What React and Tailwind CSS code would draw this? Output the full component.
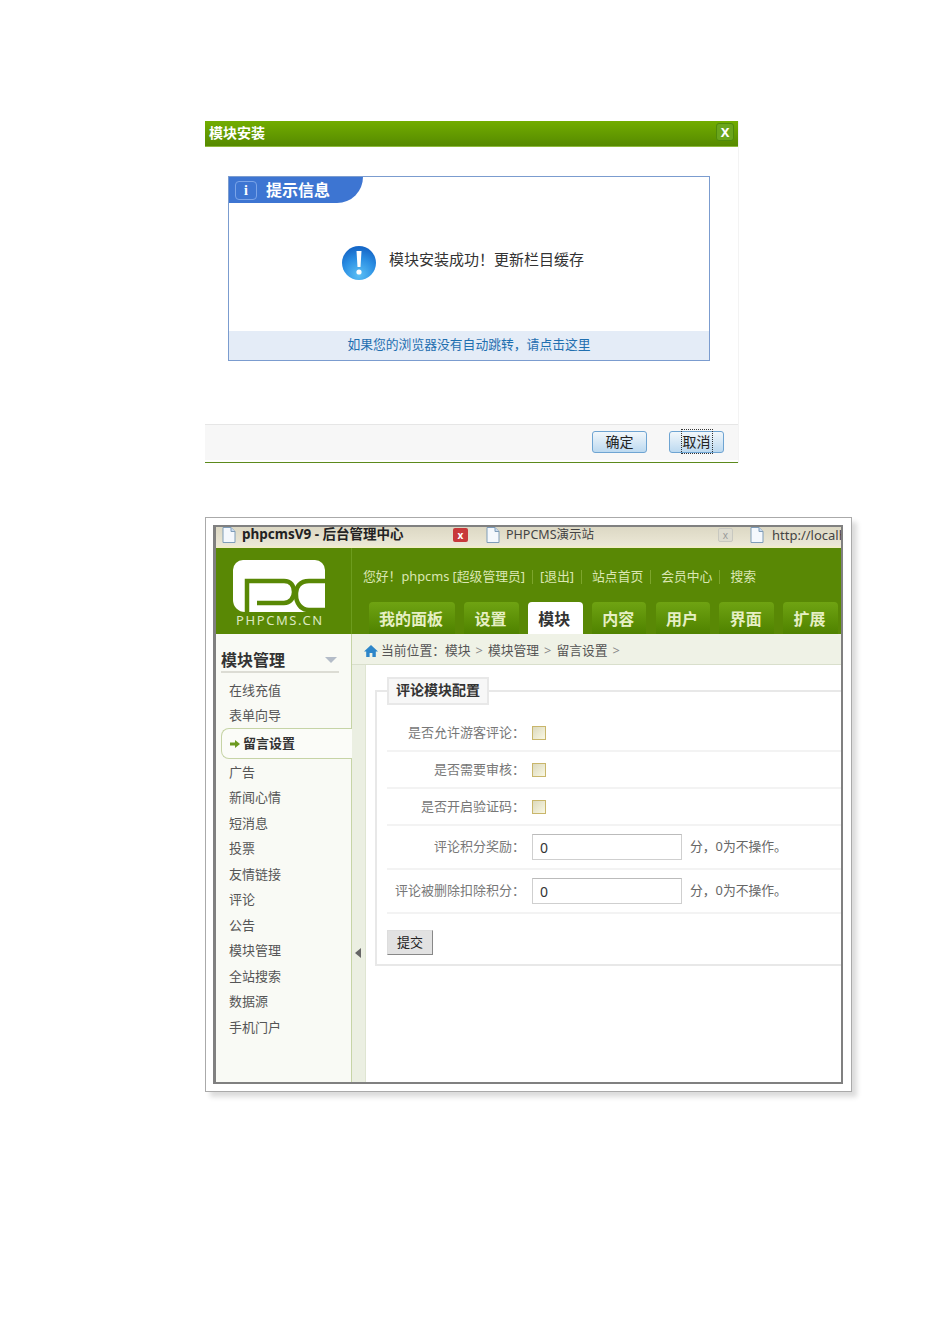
import React from 'react';

const cjk = { fontFamily: '"Noto Sans", "Noto Sans CJK SC", sans-serif' };

const DocIcon = ({ className }) => (
  <svg className={className} width="14" height="16" viewBox="0 0 14 16">
    <path d="M1 .5h8l4 4v11H1z" fill="#f4f8fd" stroke="#7f9db9" />
    <path d="M9 .5v4h4" fill="#c9daf0" stroke="#7f9db9" />
  </svg>
);

const AlertIcon = () => (
  <svg width="36" height="36" viewBox="0 0 36 36">
    <defs>
      <radialGradient id="alertBlue" cx="50%" cy="85%" r="80%">
        <stop offset="0" stopColor="#5cc0f5" />
        <stop offset="0.6" stopColor="#2b8fe3" />
        <stop offset="1" stopColor="#1668c8" />
      </radialGradient>
    </defs>
    <circle cx="18" cy="18" r="17" fill="url(#alertBlue)" />
    <path d="M15.5 6h5l-1 16h-3z" fill="#fff" />
    <circle cx="18" cy="27" r="2.6" fill="#fff" />
  </svg>
);

const Logo = () => (
  <svg width="92" height="52" viewBox="0 0 92 52" className="block">
    <path d="M10 0h72a10 10 0 0 1 10 10v42H12a12 12 0 0 1-12-12V10A10 10 0 0 1 10 0z" fill="#fff" />
    <path d="M14 52V21h37c7 0 10 5 10 11s-4 11-10 11H24" fill="none" stroke="#598805" strokeWidth="4.5" />
    <path d="M92 21H76c-9 0-13 6-13 12v2c0 8 5 15 13 15h16" fill="none" stroke="#598805" strokeWidth="4.5" />
  </svg>
);

const navTabs = [
  { label: '我的面板', w: 'w-[86px]' },
  { label: '设置', w: 'w-[54.5px]' },
  { label: '模块', w: 'w-[54.5px]', active: true },
  { label: '内容', w: 'w-[54.5px]' },
  { label: '用户', w: 'w-[54.5px]' },
  { label: '界面', w: 'w-[54.5px]' },
  { label: '扩展', w: 'w-[54.5px]' },
];

const sideTop = ['在线充值', '表单向导'];
const sideBottom = ['广告', '新闻心情', '短消息', '投票', '友情链接', '评论', '公告', '模块管理', '全站搜索', '数据源', '手机门户'];

const Sep = () => <span className="mx-[7px] h-[14px] w-px bg-[#7da52c]" />;

const FormRow = ({ label, h, children }) => (
  <div className={`flex items-center border-b-2 border-[#f3f3f3] ${h}`}>
    <div className="w-[138px] shrink-0 whitespace-nowrap text-right text-[13px] text-[#777]">{label}：</div>
    <div className="ml-[7px] flex items-center">{children}</div>
  </div>
);

const Check = () => (
  <span className="block h-[14px] w-[14px] border border-[#c9b66b] bg-gradient-to-br from-[#dcd9bd] to-[#f9f8e4]" />
);

const PointsInput = () => (
  <>
    <input
      readOnly
      value="0"
      className="h-[26px] w-[150px] border border-[#cfcfcf] border-t-[#bbb] bg-white pl-[7px] text-[14px] text-[#333] outline-none"
    />
    <span className="ml-[8px] whitespace-nowrap text-[12.8px] text-[#666]">分，0为不操作。</span>
  </>
);

export default function App() {
  return (
    <div className="h-[1344px] w-[950px] overflow-hidden bg-white pl-[205px] pt-[121px]" style={cjk}>
      {/* install dialog */}
      <div className="h-[342px] w-[534px] border-r border-[#f3f3f3]">
        <div className="flex h-[26px] items-center justify-between border-b border-[#8fba3c] bg-gradient-to-b from-[#72ad00] to-[#568a00] pb-[3px] pl-[4px] pr-[4px]">
          <span className="text-[14px] font-bold text-white">模块安装</span>
          <span className="flex h-[18px] w-[18px] items-center justify-center rounded-[3px] border border-[#4f8a0a] bg-[#6aa51c] text-[13px] font-bold leading-none text-white">X</span>
        </div>
        <div className="ml-[23px] mt-[29px] flex h-[185px] w-[482px] flex-col border border-[#7b9ccf]">
          <div className="flex h-[26px] w-[134px] items-center gap-[9px] rounded-br-[26px] bg-[#3d75d2] pl-[6px]">
            <span className="flex h-[19px] w-[22px] items-center justify-center rounded-[4px] border border-[#7ba4e8] font-['Liberation_Serif',serif] text-[14px] font-bold text-white">i</span>
            <span className="text-[16px] font-bold text-white">提示信息</span>
          </div>
          <div className="flex flex-1 items-center pb-[8px] pl-[112px]">
            <AlertIcon />
            <span className="mb-[7px] ml-[12px] text-[15px] text-[#333]">模块安装成功！更新栏目缓存</span>
          </div>
          <div className="flex h-[29px] items-center justify-center bg-[#e4ecf7] pb-[2px] text-[12.8px] text-[#1f6fb0]">
            如果您的浏览器没有自动跳转，请点击这里
          </div>
        </div>
        <div className="mt-[63px] flex h-[36px] items-start justify-end gap-[22px] border-t border-[#e6e6e6] bg-[#f7f7f7] pr-[14px] pt-[6px]">
          <button className="h-[22px] w-[55px] rounded-[3px] border border-[#6ea4d2] bg-gradient-to-b from-[#f2f7fb] to-[#bcd9f0] text-[14px] leading-none text-[#222]">确定</button>
          <button className="h-[22px] w-[55px] rounded-[3px] border border-[#6ea4d2] bg-gradient-to-b from-[#f2f7fb] to-[#bcd9f0] text-[14px] leading-none text-[#222]">
            <span className="border border-dotted border-[#333] px-px py-[2px]">取消</span>
          </button>
        </div>
        <div className="mt-[2px] h-px bg-[#5c8a1c]" />
      </div>

      {/* admin screenshot */}
      <div className="mt-[54px] h-[575px] w-[647px] border border-[#aaa] bg-white pl-[7px] pt-[7px] shadow-[5px_5px_5px_#dcdcdc]">
        <div className="flex h-[559px] w-[630px] flex-col overflow-hidden border-2 border-l-[3px] border-[#808080]">
          {/* browser tabs */}
          <div className="flex h-[21px] shrink-0 items-center border-b-2 border-[#f0ecc8] bg-gradient-to-b from-[#dcd8c4] to-[#ece8d6] pb-[3px] text-[13px] leading-none">
            <div className="flex w-[257px] shrink-0 items-center pl-[6px]">
              <DocIcon />
              <span className="ml-[6px] w-[211px] whitespace-nowrap text-[13.5px] font-bold text-[#222]">phpcmsV9 - 后台管理中心</span>
              <span className="flex h-[14px] w-[15px] items-center justify-center rounded-[2px] bg-[#c8393a] text-[10px] font-bold text-white">x</span>
            </div>
            <span className="ml-[4px] h-full w-px bg-[#d2ceb6]" />
            <div className="flex w-[256px] shrink-0 items-center pl-[9px]">
              <DocIcon />
              <span className="ml-[6px] w-[212px] whitespace-nowrap text-[12.5px] text-[#444]">PHPCMS演示站</span>
              <span className="flex h-[14px] w-[15px] items-center justify-center rounded-[2px] border border-[#c8c8c0] bg-[#dedcd0] text-[10px] text-[#999]">x</span>
            </div>
            <span className="ml-[9px] h-full w-px bg-[#d2ceb6]" />
            <div className="flex items-center pl-[8px]">
              <DocIcon />
              <span className="ml-[8px] whitespace-nowrap text-[#444]">http://localh</span>
            </div>
          </div>

          {/* green header */}
          <div className="flex h-[86px] shrink-0 bg-[#598805]">
            <div className="flex w-[136px] shrink-0 flex-col items-start border-r border-[#6d9c1d] pl-[17px] pt-[12px]">
              <Logo />
              <span className="ml-[3px] mt-[2px] text-[13px] leading-none tracking-[1.6px] text-[#dce8c0]">PHPCMS.CN</span>
            </div>
            <div className="flex min-w-0 flex-1 flex-col pl-[11px]">
              <div className="flex h-[54px] items-center whitespace-nowrap pt-[3px] text-[12.8px] text-[#dbe7b4]">
                <span>您好！phpcms [超级管理员]</span>
                <Sep />
                <span>[退出]</span>
                <Sep />
                <span className="ml-[3px]">站点首页</span>
                <Sep />
                <span className="ml-[3px]">会员中心</span>
                <Sep />
                <span className="ml-[3px]">搜索</span>
              </div>
              <div className="ml-[6px] flex gap-[9.3px]">
                {navTabs.map((tab) => (
                  <div
                    key={tab.label}
                    className={`flex h-[32px] items-center justify-center rounded-t-[4px] pr-[2px] pt-[1px] text-[16px] font-bold ${tab.w} ${
                      tab.active ? 'bg-white text-[#333]' : 'bg-gradient-to-b from-[#6fa312] to-[#4f8200] text-[#e6efc4]'
                    }`}
                  >
                    {tab.label}
                  </div>
                ))}
              </div>
            </div>
          </div>

          <div className="flex min-h-0 flex-1">
            {/* sidebar */}
            <div className="w-[136px] shrink-0 border-r border-[#c6d4a6] bg-[#f9faf5] pt-[15px]">
              <div className="ml-[5px] flex h-[24px] w-[118px] items-center justify-between border-b-2 border-[#dcdcd4] pr-[2px]">
                <span className="text-[16px] font-bold text-[#333]">模块管理</span>
                <span className="h-0 w-0 border-x-[6px] border-t-[6px] border-x-transparent border-t-[#b4bcc8]" />
              </div>
              <div className="mt-[4px]">
                {sideTop.map((item) => (
                  <div key={item} className="flex h-[25.6px] items-center pl-[13px] pt-[1px] text-[13px] text-[#555]">{item}</div>
                ))}
                <div className="-mr-px ml-[5px] flex h-[31px] items-center rounded-l-[8px] border border-r-0 border-[#c6d4a6] bg-[#fbfcf8] pl-[8px] text-[13px] font-bold text-[#333]">
                  <svg width="10" height="8" viewBox="0 0 10 8" className="mr-[3px]">
                    <path d="M0 2.5h5V0l5 4-5 4V5.5H0z" fill="#6c9a1f" />
                  </svg>
                  留言设置
                </div>
                {sideBottom.map((item) => (
                  <div key={item} className="flex h-[25.5px] items-center pl-[13px] pt-[1px] text-[13px] text-[#555]">{item}</div>
                ))}
              </div>
            </div>

            <div className="flex min-w-0 flex-1 flex-col">
              {/* breadcrumb */}
              <div className="flex h-[31px] shrink-0 items-center border-b border-[#d9dfcc] bg-[#eff2e6] pl-[12px] pt-[4px] text-[12.8px] text-[#555]">
                <svg width="14" height="14" viewBox="0 0 14 14" className="mr-[3px]">
                  <path d="M7 1 0 7.5h2.2V13h3.4V9h2.8v4h3.4V7.5H14z" fill="#2d86c9" />
                </svg>
                当前位置：模块 <span className="mx-[5px] text-[#888]">&gt;</span> 模块管理 <span className="mx-[5px] text-[#888]">&gt;</span> 留言设置 <span className="ml-[5px] text-[#888]">&gt;</span>
              </div>
              <div className="flex min-h-0 flex-1">
                <div className="w-[14px] shrink-0 border-r border-[#dfe5d2] bg-[#ebefe2] pl-[3px] pt-[283px]">
                  <span className="block h-0 w-0 border-y-[5px] border-r-[6px] border-y-transparent border-r-[#666]" />
                </div>
                {/* form */}
                <div className="min-w-0 flex-1 bg-white pl-[9px] pt-[25px]">
                  <div className="h-[276px] border-2 border-r-0 border-[#e8e8e8] pl-[10px]">
                    <div className="-mt-[15px] flex h-[28px] w-[102px] items-center justify-center border-2 border-[#e8e8e8] bg-[#f7f7f7] pb-[3px] text-[14px] font-bold text-[#333]">评论模块配置</div>
                    <div className="mt-[10px]">
                      <FormRow label="是否允许游客评论" h="h-[37px]"><Check /></FormRow>
                      <FormRow label="是否需要审核" h="h-[37px]"><Check /></FormRow>
                      <FormRow label="是否开启验证码" h="h-[37px]"><Check /></FormRow>
                      <FormRow label="评论积分奖励" h="h-[44px]"><PointsInput /></FormRow>
                      <FormRow label="评论被删除扣除积分" h="h-[44px]"><PointsInput /></FormRow>
                    </div>
                    <button className="mt-[16px] h-[25px] w-[46px] border border-[#ddd] border-b-[#888] border-r-[#888] bg-[#e2e2e2] text-[13px] leading-none text-[#222]">提交</button>
                  </div>
                </div>
              </div>
            </div>
          </div>
        </div>
      </div>
    </div>
  );
}
